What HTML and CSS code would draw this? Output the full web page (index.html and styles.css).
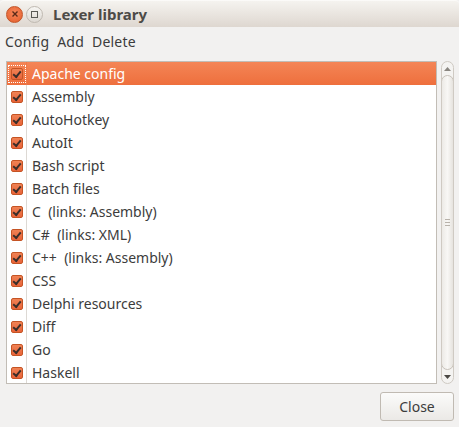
FILE: index.html
```html
<!DOCTYPE html>
<html>
<head>
<meta charset="utf-8">
<link rel="stylesheet" href="styles.css">
</head>
<body>
<div class="window">
  <div class="titlebar">
    <span class="wbtn close-btn"><svg width="8" height="8" viewBox="0 0 8 8"><path d="M1.5 1.5 L6.5 6.5 M6.5 1.5 L1.5 6.5" stroke="#5a2a18" stroke-width="1.4"/></svg></span>
    <span class="wbtn max-btn"><svg width="9" height="9" viewBox="0 0 9 9"><rect x="1.5" y="1.5" width="6" height="6" fill="none" stroke="#5a5a55" stroke-width="1"/></svg></span>
    <span class="title">Lexer library</span>
  </div>
  <div class="menubar">
    <span class="menu">Config</span>
    <span class="menu">Add</span>
    <span class="menu">Delete</span>
  </div>
  <div class="content">
    <div class="listwrap">
      <div class="list">
        <div class="row selected"><span class="cbcell"><span class="focus"><span class="cb"></span></span></span><span class="label">Apache config</span></div>
        <div class="row"><span class="cbcell"><span class="cb"></span></span><span class="label">Assembly</span></div>
        <div class="row"><span class="cbcell"><span class="cb"></span></span><span class="label">AutoHotkey</span></div>
        <div class="row"><span class="cbcell"><span class="cb"></span></span><span class="label">AutoIt</span></div>
        <div class="row"><span class="cbcell"><span class="cb"></span></span><span class="label">Bash script</span></div>
        <div class="row"><span class="cbcell"><span class="cb"></span></span><span class="label">Batch files</span></div>
        <div class="row"><span class="cbcell"><span class="cb"></span></span><span class="label">C&nbsp; (links: Assembly)</span></div>
        <div class="row"><span class="cbcell"><span class="cb"></span></span><span class="label">C#&nbsp; (links: XML)</span></div>
        <div class="row"><span class="cbcell"><span class="cb"></span></span><span class="label">C++&nbsp; (links: Assembly)</span></div>
        <div class="row"><span class="cbcell"><span class="cb"></span></span><span class="label">CSS</span></div>
        <div class="row"><span class="cbcell"><span class="cb"></span></span><span class="label">Delphi resources</span></div>
        <div class="row"><span class="cbcell"><span class="cb"></span></span><span class="label">Diff</span></div>
        <div class="row"><span class="cbcell"><span class="cb"></span></span><span class="label">Go</span></div>
        <div class="row"><span class="cbcell"><span class="cb"></span></span><span class="label">Haskell</span></div>
      </div>
      <div class="scrollbar">
        <div class="sb-up"><svg width="7" height="4" viewBox="0 0 7 4"><path d="M0 4 L3.5 0 L7 4 Z" fill="#8a8680"/></svg></div>
        <div class="thumb">
          <div class="grip"><i></i><i></i><i></i></div>
        </div>
        <div class="sb-down"><svg width="7" height="4" viewBox="0 0 7 4"><path d="M0 0 L3.5 4 L7 0 Z" fill="#4a4844"/></svg></div>
      </div>
    </div>
    <div class="buttons">
      <button class="btn">Close</button>
    </div>
  </div>
</div>
</body>
</html>
```

FILE: styles.css
```css
html, body {
  margin: 0;
  padding: 0;
  background: #f2f1f0;
}
body {
  font-family: "Noto Sans", "DejaVu Sans", sans-serif;
  font-size: 14px;
  color: #3c3c3c;
}
.window {
  width: 459px;
  height: 427px;
  display: flex;
  flex-direction: column;
  background: #f2f1f0;
}
.titlebar {
  height: 28px;
  box-sizing: border-box;
  background: linear-gradient(#f5f3ef, #ded7d0);
  border-top: 1px solid #fbfaf8;
  border-radius: 4px 4px 0 0;
  display: flex;
  align-items: center;
  padding-left: 6px;
}
.wbtn {
  width: 17px;
  height: 17px;
  border-radius: 50%;
  display: flex;
  align-items: center;
  justify-content: center;
  box-sizing: border-box;
}
.close-btn {
  background: radial-gradient(circle at 50% 40%, #f7875a, #e35c2a);
  border: 1px solid #c25528;
}
.max-btn {
  margin-left: 3px;
  background: linear-gradient(#f7f6f3, #ddd8d2);
  border: 1px solid #bfb9b1;
}
.title {
  margin-left: 10px;
  font-weight: bold;
  font-size: 15px;
  color: #4d4b47;
}
.menubar {
  height: 27px;
  display: flex;
  align-items: center;
  padding-left: 5px;
  gap: 8px;
  padding-top: 1px;
  box-sizing: border-box;
}
.menu {
  color: #3c3c3c;
  letter-spacing: 0.2px;
}
.content {
  flex: 1;
  display: flex;
  flex-direction: column;
  padding: 7px 5px 6px 6px;
}
.listwrap {
  display: flex;
  height: 323px;
}
.list {
  width: 431px;
  box-sizing: border-box;
  border: 1px solid #c2bdb6;
  background: #ffffff;
  overflow: hidden;
}
.row {
  height: 23px;
  display: flex;
  align-items: center;
  color: #3c3c3c;
}
.row.selected {
  background: linear-gradient(#f48556, #ee6f3d);
  color: #ffffff;
}
.cbcell {
  width: 19px;
  height: 23px;
  border-right: 1px solid #ddd9d4;
  display: flex;
  align-items: center;
  justify-content: center;
  flex-shrink: 0;
}
.selected .cbcell {
  border-right-color: #ee7a4a;
}
.focus {
  width: 18px;
  height: 18px;
  box-sizing: border-box;
  border: 1px dotted #ffffff;
  display: flex;
  align-items: center;
  justify-content: center;
}
.cb {
  width: 12px;
  height: 12px;
  box-sizing: border-box;
  border-radius: 2px;
  border: 1px solid #c55424;
  background: linear-gradient(#f08254, #e8643a);
  position: relative;
}
.cb::after {
  content: "";
  position: absolute;
  width: 6px;
  height: 3px;
  border-left: 2px solid #3a2e2a;
  border-bottom: 2px solid #3a2e2a;
  transform: rotate(-50deg);
  transform-origin: 50% 50%;
  top: 2px;
  left: 1px;
}
.label {
  margin-left: 5px;
  white-space: nowrap;
}
.scrollbar {
  width: 13px;
  margin-left: 4px;
  box-sizing: border-box;
  border: 1px solid #cfcac3;
  border-radius: 7px;
  background: #f4f3f1;
  display: flex;
  flex-direction: column;
  overflow: hidden;
}
.sb-up, .sb-down {
  height: 13px;
  display: flex;
  align-items: center;
  justify-content: center;
  flex-shrink: 0;
}
.thumb {
  flex: 1;
  margin: 0 -1px;
  border: 1px solid #c7c1b9;
  border-radius: 7px;
  background: linear-gradient(90deg, #eceae6, #f8f7f5 50%, #e6e3de);
  display: flex;
  align-items: center;
  justify-content: center;
}
.grip {
  display: flex;
  flex-direction: column;
  gap: 2px;
}
.grip i {
  display: block;
  width: 5px;
  height: 1px;
  background: #b8b2aa;
}
.buttons {
  display: flex;
  justify-content: flex-end;
  margin-top: 8px;
}
.btn {
  width: 74px;
  height: 29px;
  font-family: "Noto Sans", "DejaVu Sans", sans-serif;
  font-size: 14px;
  color: #3c3c3c;
  border: 1px solid #c0bab2;
  border-radius: 3px;
  background: linear-gradient(#fbfbfa, #ebe9e6);
  padding: 0;
}
```
